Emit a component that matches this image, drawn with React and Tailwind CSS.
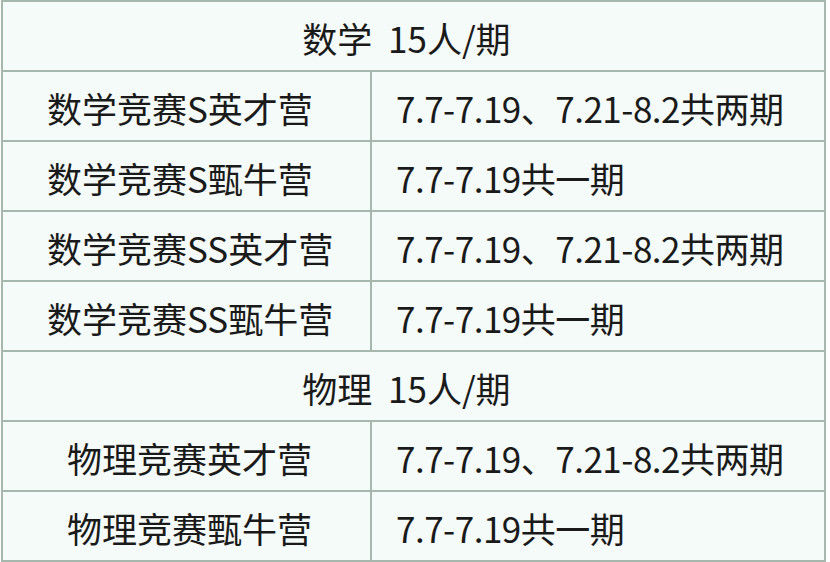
export default function App() {
  const font = { fontFamily: '"Noto Sans CJK SC", "Noto Sans", sans-serif' };
  const rows = [
    { type: "h", text: "数学\u00a0\u00a015人/期" },
    { type: "r", a: "数学竞赛S英才营", b: "7.7-7.19、7.21-8.2共两期", pad: "pl-[44px]" },
    { type: "r", a: "数学竞赛S甄牛营", b: "7.7-7.19共一期", pad: "pl-[44px]" },
    { type: "r", a: "数学竞赛SS英才营", b: "7.7-7.19、7.21-8.2共两期", pad: "pl-[44px]" },
    { type: "r", a: "数学竞赛SS甄牛营", b: "7.7-7.19共一期", pad: "pl-[44px]" },
    { type: "h", text: "物理\u00a0\u00a015人/期" },
    { type: "r", a: "物理竞赛英才营", b: "7.7-7.19、7.21-8.2共两期", pad: "pl-[64px]" },
    { type: "r", a: "物理竞赛甄牛营", b: "7.7-7.19共一期", pad: "pl-[64px]" },
  ];
  return (
    <div className="w-[830px] h-[562px] bg-white overflow-hidden" style={font}>
      <div className="ml-[1px] w-[825px] border-2 border-[#a6b8ad] bg-[#f5fbf8] text-[#1a1a1a] text-[35px] leading-none">
        {rows.map((r, i) =>
          r.type === "h" ? (
            <div
              key={i}
              className={`h-[68px] flex items-center justify-center pr-[14px] pt-[2px] ${i > 0 ? "border-t-2 border-[#a6b8ad] h-[70px]" : ""}`}
            >
              {r.text}
            </div>
          ) : (
            <div key={i} className="h-[70px] border-t-2 border-[#a6b8ad] grid grid-cols-[369px_1fr]">
              <div className={`flex items-center border-r-2 border-[#a6b8ad] pt-[2px] ${r.pad}`}>{r.a}</div>
              <div className="flex items-center pl-[24px] pt-[2px] tracking-[-0.5px]">{r.b}</div>
            </div>
          )
        )}
      </div>
    </div>
  );
}
